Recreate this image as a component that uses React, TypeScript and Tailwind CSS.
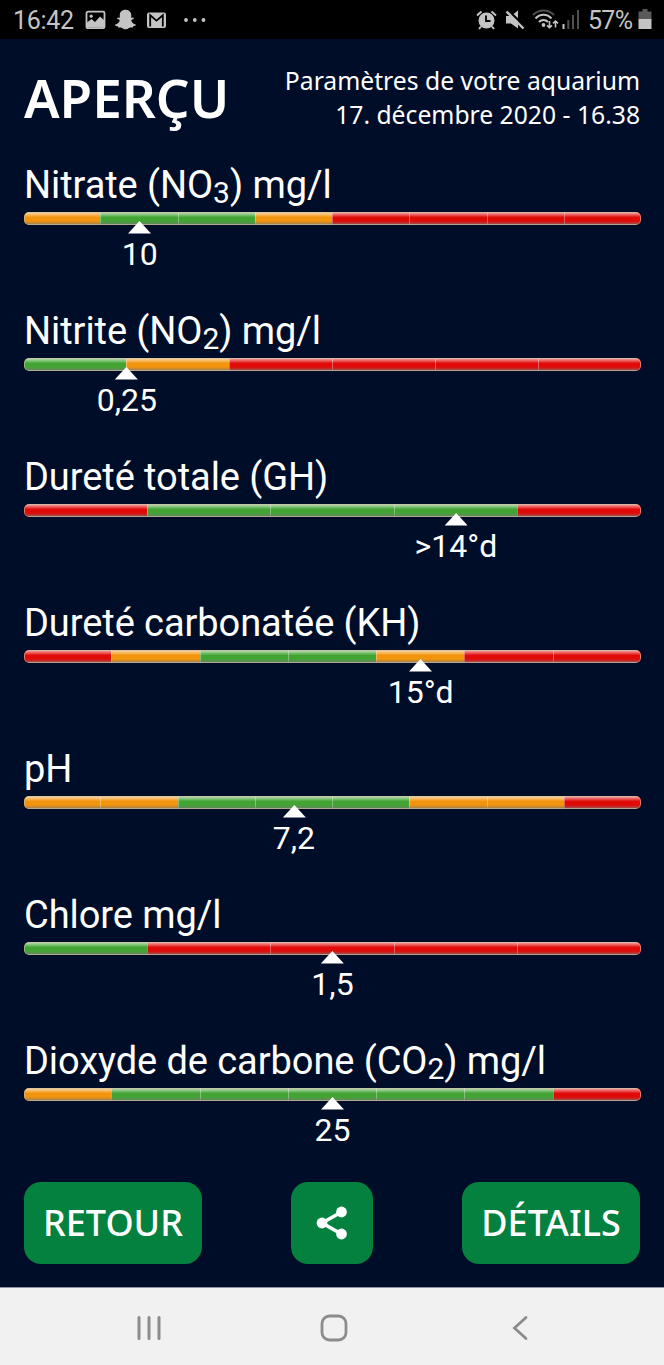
import type { ReactNode } from "react";
import { FaSnapchatGhost } from "react-icons/fa";

type Level = "bad" | "warn" | "good";

interface Parameter {
  id: string;
  label: ReactNode;
  levels: Level[];
  value: string;
  // marker position, counted in segments from the left
  position: number;
}

const levelColors: Record<Level, string> = {
  bad: "bg-[#e00a08]",
  warn: "bg-[#f3950c]",
  good: "bg-[#42a433]",
};

const Sub = ({ children }: { children: ReactNode }) => (
  <span className="relative top-[5px] text-[30px] leading-none">{children}</span>
);

const parameters: Parameter[] = [
  {
    id: "no3",
    label: <>Nitrate (NO<Sub>3</Sub>) mg/l</>,
    levels: ["warn", "good", "good", "warn", "bad", "bad", "bad", "bad"],
    value: "10",
    position: 1.5,
  },
  {
    id: "no2",
    label: <>Nitrite (NO<Sub>2</Sub>) mg/l</>,
    levels: ["good", "warn", "bad", "bad", "bad", "bad"],
    value: "0,25",
    position: 1,
  },
  {
    id: "gh",
    label: "Dureté totale (GH)",
    levels: ["bad", "good", "good", "good", "bad"],
    value: ">14°d",
    position: 3.5,
  },
  {
    id: "kh",
    label: "Dureté carbonatée (KH)",
    levels: ["bad", "warn", "good", "good", "warn", "bad", "bad"],
    value: "15°d",
    position: 4.5,
  },
  {
    id: "ph",
    label: "pH",
    levels: ["warn", "warn", "good", "good", "good", "warn", "warn", "bad"],
    value: "7,2",
    position: 3.5,
  },
  {
    id: "cl",
    label: "Chlore mg/l",
    levels: ["good", "bad", "bad", "bad", "bad"],
    value: "1,5",
    position: 2.5,
  },
  {
    id: "co2",
    label: <>Dioxyde de carbone (CO<Sub>2</Sub>) mg/l</>,
    levels: ["warn", "good", "good", "good", "good", "good", "bad"],
    value: "25",
    position: 3.5,
  },
];

function StatusBar() {
  return (
    <div className="flex h-[39px] shrink-0 items-center justify-between bg-black pl-[13px] pr-[12px] font-['Roboto',sans-serif] text-[25px] text-[#c4c4c4]">
      <div className="flex items-center">
        <span className="relative top-px w-[61px] whitespace-nowrap tracking-[-0.3px]">16:42</span>
        <svg className="ml-[11px]" width="21" height="20" viewBox="0 0 21 20" fill="none">
          <rect x="1.5" y="1.7" width="18" height="16.5" rx="1.5" stroke="currentColor" strokeWidth="1.8" />
          <circle cx="6.2" cy="6.2" r="1.6" fill="currentColor" />
          <path d="M2 16V12.5L6.5 9L10 12L15 6.5L19 10V17.5H2Z" fill="currentColor" />
        </svg>
        <FaSnapchatGhost className="ml-[9px] h-[21px] w-[21px]" />
        <svg className="ml-[10px]" width="21" height="18" viewBox="0 0 21 18" fill="none">
          <rect x="1" y="1.5" width="19" height="15.5" rx="2" fill="currentColor" />
          <path d="M4.2 15.5V4.2L10.5 9.6L16.8 4.2V15.5" stroke="#000" strokeWidth="1.8" />
        </svg>
        <svg className="ml-[17px]" width="22" height="6" viewBox="0 0 22 6" fill="currentColor">
          <circle cx="2" cy="3" r="1.9" />
          <circle cx="10.8" cy="3" r="1.9" />
          <circle cx="19.5" cy="3" r="1.9" />
        </svg>
      </div>

      <div className="flex items-center">
        <svg width="21" height="20" viewBox="0 0 21 20" fill="none" stroke="currentColor">
          <circle cx="10.5" cy="10.5" r="8" fill="currentColor" stroke="none" />
          <path d="M1 5.5L5.5 1.5M15.5 1.5L20 5.5M5 16.5L3 19M16 16.5L18 19" strokeWidth="2" />
          <path d="M10 5.5V11H14.5" stroke="#000" strokeWidth="1.8" />
        </svg>
        <svg className="ml-[8px]" width="20" height="20" viewBox="0 0 20 20" fill="currentColor">
          <path d="M1 6H6L13 0.5V18.5L6 13.5H1Z" />
          <path d="M2.5 0L20 16.5" stroke="#000" strokeWidth="2.4" />
          <path d="M1.5 1.5L18.5 18.5" stroke="currentColor" strokeWidth="2.4" />
        </svg>
        <svg className="ml-[7px]" width="27" height="21" viewBox="0 0 27 21" fill="none" strokeWidth="2">
          <path d="M1 6C7 0 16 0 22 6" stroke="#4f4f4f" />
          <path d="M3.5 9.5C8 4.5 15 4.5 19.5 9.5M7 13C9.5 10.3 13.5 10.3 16 13" stroke="currentColor" />
          <circle cx="11.5" cy="16" r="1.9" fill="currentColor" />
          <path d="M17.5 12V18.5M15 16.3L17.5 18.7L20 16.3M23.5 18.5V12M21 14.4L23.5 12L26 14.4" stroke="currentColor" strokeWidth="1.6" />
        </svg>
        <svg className="ml-[3px]" width="18" height="21" viewBox="0 0 18 21">
          <rect x="0.5" y="15" width="2" height="5" fill="currentColor" />
          <rect x="5.3" y="11" width="2" height="9" fill="#505050" />
          <rect x="10" y="6" width="2" height="14" fill="#505050" />
          <rect x="15" y="1" width="2" height="19" fill="#505050" />
        </svg>
        <span className="relative top-px ml-[8px] w-[47px] whitespace-nowrap tracking-[-0.7px]">57%</span>
        <svg className="relative -top-px ml-[3px]" width="14" height="20" viewBox="0 0 14 20">
          <path d="M4.5 0H9.5V2.5H13.5V10H0.5V2.5H4.5Z" fill="#5a5a5a" />
          <path d="M0.5 10H13.5V20H0.5Z" fill="currentColor" />
        </svg>
      </div>
    </div>
  );
}

function ParameterRow({ parameter }: { parameter: Parameter }) {
  const { label, levels, value, position } = parameter;

  return (
    <section className="h-[146px] shrink-0">
      <h2 className="h-[49px] whitespace-nowrap text-[38px] leading-[50px] tracking-[-0.07px]">{label}</h2>
      <div className="relative mt-[3px]">
        <div className="relative flex h-[13px] overflow-hidden rounded-[5px]">
          {levels.map((level, i) => (
            <div
              key={i}
              className={`flex-1 ${levelColors[level]} ${i > 0 ? "border-l border-white/35" : ""}`}
            />
          ))}
          {/* Glossy edge */}
          <div className="absolute inset-0 rounded-[5px] border border-x-[#c9b8a4]/70 border-t-[#d8c9b4]/90 border-b-[#b3a592]/90 bg-gradient-to-b from-white/50 from-5% via-transparent via-40% to-transparent" />
          <div className="absolute inset-x-[2px] bottom-px h-[3px] bg-gradient-to-b from-transparent to-[#777]/60" />
        </div>
        <div
          className="absolute top-[9px] flex -translate-x-1/2 flex-col items-center"
          style={{ left: `${(position / levels.length) * 100}%` }}
        >
          <svg width="23" height="13" viewBox="0 0 23 13" fill="#fff">
            <path d="M11.5 0L23 12.5H0Z" />
          </svg>
          <span className="mt-px whitespace-nowrap text-[32px] leading-[39px]">{value}</span>
        </div>
      </div>
    </section>
  );
}

function App() {
  return (
    <div className="flex h-[1365px] w-[664px] flex-col overflow-hidden bg-[#000d29] text-white">
      <StatusBar />

      <main className="flex flex-1 flex-col pl-[24px] pr-[23px] font-['Roboto',sans-serif]">
        <header className="flex h-[121px] shrink-0 items-start justify-between font-['Noto_Sans',sans-serif]">
          <h1 className="mt-[23px] whitespace-nowrap text-[53px] font-semibold leading-[72px]">APERÇU</h1>
          <p className="mt-[25px] whitespace-nowrap pr-px text-right text-[24.7px] leading-[34px]">
            Paramètres de votre aquarium
            <br />
            17. décembre 2020 - 16.38
          </p>
        </header>

        {parameters.map((parameter) => (
          <ParameterRow key={parameter.id} parameter={parameter} />
        ))}

        <div className="flex justify-between pr-px font-['Noto_Sans',sans-serif] text-[36px] font-medium">
          <button className="h-[82px] w-[178px] rounded-[17px] bg-[#04813f]">RETOUR</button>
          <button className="flex h-[82px] w-[82px] items-center justify-center rounded-[17px] bg-[#04813f]" aria-label="Partager">
            <svg width="32" height="34" viewBox="0 0 32 34" fill="#fff">
              <path d="M25.5 6L6 17L25.5 28" fill="none" stroke="#fff" strokeWidth="3.6" />
              <circle cx="25.5" cy="6" r="5.4" />
              <circle cx="6" cy="17" r="5.4" />
              <circle cx="25.5" cy="28" r="5.4" />
            </svg>
          </button>
          <button className="h-[82px] w-[178px] rounded-[17px] bg-[#04813f]">DÉTAILS</button>
        </div>
      </main>

      <nav className="flex h-[78px] shrink-0 items-center justify-between border-t border-[#8f90a0] bg-[#f1f1f1] pl-[136px] pr-[134px] pt-[3px] text-[#8c8c8c]">
        <svg width="26" height="26" viewBox="0 0 26 26" fill="none" stroke="currentColor" strokeWidth="3" strokeLinecap="round">
          <path d="M3 2.5V23.5M13 2.5V23.5M23 2.5V23.5" />
        </svg>
        <svg className="-ml-[4px]" width="28" height="28" viewBox="0 0 28 28" fill="none" stroke="currentColor" strokeWidth="2.8">
          <rect x="2" y="2" width="24" height="24" rx="7.5" />
        </svg>
        <svg width="20" height="26" viewBox="0 0 20 26" fill="none" stroke="currentColor" strokeWidth="2.8" strokeLinecap="round">
          <path d="M16 2.5L4.5 13L16 23.5" />
        </svg>
      </nav>
    </div>
  );
}

export default App;
